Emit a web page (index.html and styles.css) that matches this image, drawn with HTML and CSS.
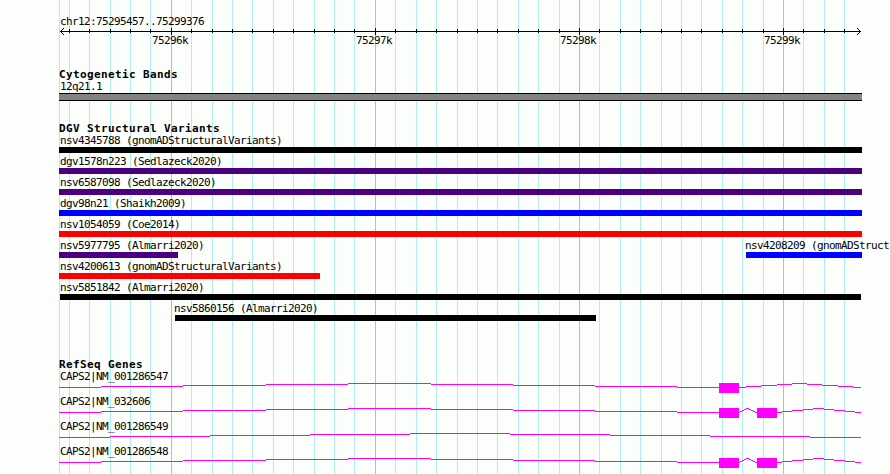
FILE: index.html
```html
<!DOCTYPE html>
<html>
<head>
	<meta charset="utf-8">
	<title>chr12:75295457..75299376</title>
	<link rel="stylesheet" href="styles.css">
</head>
<body>
	<div id="browser">
		<svg class="gridlines" width="889" height="474">
			<path class="minor" d="M59.5 0v474M69.5 0v474M89.5 0v474M110.5 0v474M130.5 0v474M150.5 0v474M191.5 0v474M212.5 0v474M232.5 0v474M252.5 0v474M273.5 0v474M293.5 0v474M314.5 0v474M334.5 0v474M354.5 0v474M395.5 0v474M416.5 0v474M436.5 0v474M457.5 0v474M477.5 0v474M497.5 0v474M518.5 0v474M538.5 0v474M559.5 0v474M599.5 0v474M620.5 0v474M640.5 0v474M661.5 0v474M681.5 0v474M701.5 0v474M722.5 0v474M742.5 0v474M763.5 0v474M803.5 0v474M824.5 0v474M844.5 0v474"/>
			<path class="major" d="M171.5 0v474M375.5 0v474M579.5 0v474M783.5 0v474"/>
		</svg>

		<div class="ruler">
			<p class="label">chr12:75295457..75299376</p>
			<svg width="803" height="7" viewBox="59 28 803 7">
				<path d="M60 31.5H861"/>
				<path d="M69.5 29v4M89.5 29v4M110.5 29v4M130.5 29v4M150.5 29v4M191.5 29v4M212.5 29v4M232.5 29v4M252.5 29v4M273.5 29v4M293.5 29v4M314.5 29v4M334.5 29v4M354.5 29v4M395.5 29v4M416.5 29v4M436.5 29v4M457.5 29v4M477.5 29v4M497.5 29v4M518.5 29v4M538.5 29v4M559.5 29v4M599.5 29v4M620.5 29v4M640.5 29v4M661.5 29v4M681.5 29v4M701.5 29v4M722.5 29v4M742.5 29v4M763.5 29v4M803.5 29v4M824.5 29v4M844.5 29v4"/>
				<path d="M171.5 28v7M375.5 28v7M579.5 28v7M783.5 28v7"/>
				<path d="M63 28.5h1M62 29.5h1M61 30.5h1M60 31.5h1M61 32.5h1M62 33.5h1M63 34.5h1"/>
				<path d="M857 28.5h1M858 29.5h1M859 30.5h1M860 31.5h1M859 32.5h1M858 33.5h1M857 34.5h1"/>
			</svg>
			<div class="ticks">
				<span>75296k</span>
				<span>75297k</span>
				<span>75298k</span>
				<span>75299k</span>
			</div>
		</div>

		<div class="track cytoband">
			<h2>Cytogenetic Bands</h2>
			<p class="label">12q21.1</p>
			<div class="band"></div>
		</div>

		<div class="track variants">
			<h2>DGV Structural Variants</h2>
			<div class="row">
				<div class="feature black" style="width: 803px"><p class="label">nsv4345788 (gnomADStructuralVariants)</p></div>
			</div>
			<div class="row">
				<div class="feature purple" style="width: 803px"><p class="label">dgv1578n223 (Sedlazeck2020)</p></div>
			</div>
			<div class="row">
				<div class="feature purple" style="width: 803px"><p class="label">nsv6587098 (Sedlazeck2020)</p></div>
			</div>
			<div class="row">
				<div class="feature blue" style="width: 803px"><p class="label">dgv98n21 (Shaikh2009)</p></div>
			</div>
			<div class="row">
				<div class="feature red" style="width: 803px"><p class="label">nsv1054059 (Coe2014)</p></div>
			</div>
			<div class="row">
				<div class="feature purple" style="width: 119px"><p class="label">nsv5977795 (Almarri2020)</p></div>
				<div class="feature blue inner" style="width: 116px; margin-left: 568px"><p class="label">nsv4208209 (gnomADStruct</p></div>
			</div>
			<div class="row">
				<div class="feature red" style="width: 261px"><p class="label">nsv4200613 (gnomADStructuralVariants)</p></div>
			</div>
			<div class="row">
				<div class="feature black start" style="width: 801px; margin-left: 1px"><p class="label">nsv5851842 (Almarri2020)</p></div>
			</div>
			<div class="row">
				<div class="feature black inner" style="width: 421px; margin-left: 116px"><p class="label">nsv5860156 (Almarri2020)</p></div>
			</div>
		</div>

		<div class="track genes">
			<h2>RefSeq Genes</h2>
			<div class="gene">
				<p class="label">CAPS2|NM_001286547</p>
				<svg width="803" height="10" viewBox="59 0 803 10">
					<path d="M59 4.5H101m0 -1H183m0 -1H266m0 -1H348m0 -1H431m0 1H513m0 1H595m0 1H677m0 1H719"/>
					<path d="M739 4.5H746m0 -1H761m0 -1H777m0 -1H792m0 -1H807m0 1H822m0 1H838m0 1H853m0 1H861"/>
					<rect x="719" width="20" height="10"/>
				</svg>
			</div>
			<div class="gene">
				<p class="label">CAPS2|NM_032606</p>
				<svg width="803" height="10" viewBox="59 0 803 10">
					<path d="M59 4.5H101m0 -1H183m0 -1H266m0 -1H348m0 -1H431m0 1H513m0 1H595m0 1H677m0 1H719"/>
					<path d="M739 4.5H740m0 -1H742m0 -1H744m0 -1H746m0 -1H749m0 1H751m0 1H753m0 1H755m0 1H757"/>
					<path d="M777 4.5H782m0 -1H792m0 -1H803m0 -1H813m0 -1H824m0 1H834m0 1H845m0 1H855m0 1H861"/>
					<rect x="719" width="20" height="10"/>
					<rect x="757" width="20" height="10"/>
				</svg>
			</div>
			<div class="gene">
				<p class="label">CAPS2|NM_001286549</p>
				<svg width="803" height="10" viewBox="59 0 803 10">
					<path d="M59 4.5H110m0 -1H210m0 -1H310m0 -1H410m0 -1H510m0 1H610m0 1H710m0 1H810m0 1H861"/>
				</svg>
			</div>
			<div class="gene">
				<p class="label">CAPS2|NM_001286548</p>
				<svg width="803" height="10" viewBox="59 0 803 10">
					<path d="M59 4.5H101m0 -1H183m0 -1H266m0 -1H348m0 -1H431m0 1H513m0 1H595m0 1H677m0 1H719"/>
					<path d="M739 4.5H740m0 -1H742m0 -1H744m0 -1H746m0 -1H749m0 1H751m0 1H753m0 1H755m0 1H757"/>
					<path d="M777 4.5H782m0 -1H792m0 -1H803m0 -1H813m0 -1H824m0 1H834m0 1H845m0 1H855m0 1H861"/>
					<rect x="719" width="20" height="10"/>
					<rect x="757" width="20" height="10"/>
				</svg>
			</div>
		</div>
	</div>
</body>
</html>
```
FILE: styles.css
```css
body {
	margin: 0;
	background-color: #fcfefc;
	color: #000;
	font: 11px/12px "DejaVu Sans Mono", monospace;
	letter-spacing: -0.62px;
}
#browser {
	position: relative;
	box-sizing: border-box;
	width: 889px;
	height: 474px;
	padding: 16px 0 0 59px;
	overflow: hidden;
}
svg {
	display: block;
	fill: none;
	shape-rendering: crispEdges;
}

/* guide lines behind the tracks */
.gridlines {
	position: absolute;
	top: 0;
	left: 0;
}
.gridlines .minor {
	stroke: #afeeee;
}
.gridlines .major {
	stroke: #87ceeb;
}
.ruler, .track {
	position: relative;
}

h2, p {
	margin: 0;
}
h2 {
	height: 12px;
	font-size: 11px;
	font-weight: bold;
	letter-spacing: 0.38px;
	white-space: nowrap;
}
.label {
	height: 12px;
	padding-left: 1px;
	white-space: nowrap;
}

.ruler {
	height: 53px;
}
.ruler svg {
	stroke: #000;
}
.ticks {
	display: flex;
	padding-left: 93px;
}
.ticks span {
	flex: none;
	width: 204px;
}
.ticks span:last-child {
	width: auto;
}

.cytoband {
	height: 54px;
}
.band {
	box-sizing: border-box;
	width: 803px;
	height: 8px;
	background-color: #848284;
	border: solid #000;
	border-width: 1px 0;
}

.variants {
	height: 236px;
}
.row {
	display: flex;
	height: 21px;
}
.feature {
	flex: none;
	box-sizing: border-box;
	height: 18px;
	border-bottom: 6px solid;
}
.feature .label {
	color: #000;
}
.feature.start .label {
	padding-left: 0;
}
.feature.inner .label {
	margin-left: -1px;
	padding-left: 0;
}
.black {
	border-color: #000;
}
.purple {
	border-color: #4b0082;
}
.blue {
	border-color: #00f;
}
.red {
	border-color: #f00;
}

.gene {
	height: 25px;
}
.gene svg {
	stroke: #f0f;
}
.gene rect {
	fill: #f0f;
	stroke: none;
}
```
